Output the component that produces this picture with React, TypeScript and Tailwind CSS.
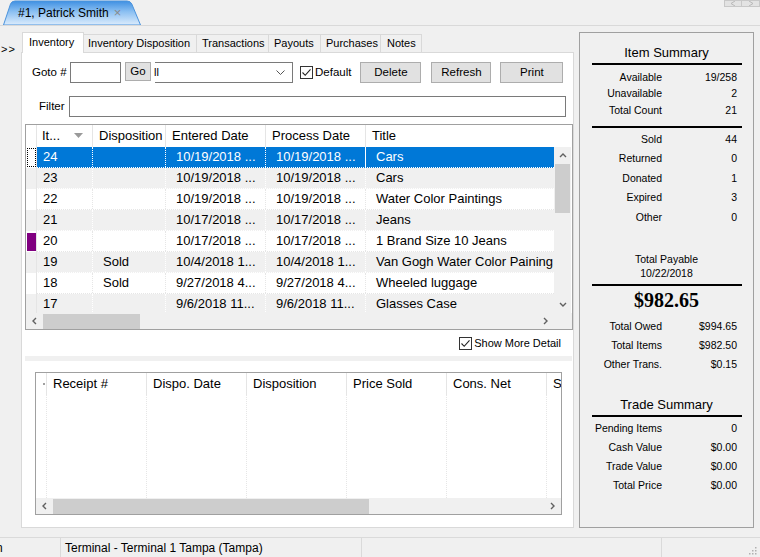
import React from 'react';

const FONT = "font-['Liberation_Sans',Arial,sans-serif]";

function Chev({ dir, className = '' }: { dir: 'up' | 'down' | 'left' | 'right'; className?: string }) {
  const paths: Record<string, string> = {
    up: 'M1,5 L4,2 L7,5',
    down: 'M1,2 L4,5 L7,2',
    left: 'M5,1 L2,4 L5,7',
    right: 'M2,1 L5,4 L2,7',
  };
  return (
    <svg width="8" height="8" viewBox="0 0 8 8" className={className}>
      <path d={paths[dir]} fill="none" stroke="#606060" strokeWidth="1.4" />
    </svg>
  );
}

function Check({ className = '' }: { className?: string }) {
  return (
    <div className={`w-[13px] h-[13px] border border-[#333] bg-white flex items-center justify-center ${className}`}>
      <svg width="11" height="11" viewBox="0 0 11 11">
        <path d="M1.5,5.5 L4.2,8.3 L9.5,2.3" fill="none" stroke="#222" strokeWidth="1.1" />
      </svg>
    </div>
  );
}

const rows = [
  { id: '24', disp: '', ent: '10/19/2018 ...', proc: '10/19/2018 ...', title: 'Cars', sel: true },
  { id: '23', disp: '', ent: '10/19/2018 ...', proc: '10/19/2018 ...', title: 'Cars' },
  { id: '22', disp: '', ent: '10/19/2018 ...', proc: '10/19/2018 ...', title: 'Water Color Paintings' },
  { id: '21', disp: '', ent: '10/17/2018 ...', proc: '10/17/2018 ...', title: 'Jeans' },
  { id: '20', disp: '', ent: '10/17/2018 ...', proc: '10/17/2018 ...', title: '1 Brand Size 10 Jeans', mark: true },
  { id: '19', disp: 'Sold', ent: '10/4/2018 1...', proc: '10/4/2018 1...', title: 'Van Gogh Water Color Paining' },
  { id: '18', disp: 'Sold', ent: '9/27/2018 4...', proc: '9/27/2018 4...', title: 'Wheeled luggage' },
  { id: '17', disp: '', ent: '9/6/2018 11...', proc: '9/6/2018 11...', title: 'Glasses Case' },
];

function SummaryRow({ label, value, h }: { label: string; value: string; h: string }) {
  return (
    <div className={`flex items-center ${h} text-[10.5px] text-black`}>
      <div className="w-[82px] text-right whitespace-nowrap">{label}</div>
      <div className="w-[75px] text-right">{value}</div>
    </div>
  );
}

export default function App() {
  return (
    <div className={`w-[760px] h-[557px] bg-[#f0f0f0] relative overflow-hidden flex flex-col ${FONT} text-black`}>
      {/* top doc tab bar */}
      <div className="h-[26px] border-b border-[#d9d9d9] flex items-end pl-[3px] relative">
        <div className="relative w-[138px] h-[25px] flex items-center pl-[15px]">
          <svg className="absolute left-0 top-0" width="138" height="25" viewBox="0 0 138 25">
            <defs>
              <linearGradient id="tabg" x1="0" y1="0" x2="0" y2="1">
                <stop offset="0" stopColor="#3f90e2" />
                <stop offset="0.45" stopColor="#8cc0f2" />
                <stop offset="1" stopColor="#dcecfc" />
              </linearGradient>
            </defs>
            <path d="M0.5,25 L7.5,4 Q8.7,1 12,1 L124,1 Q127.5,1 128.8,4 L137.5,25 Z" fill="url(#tabg)" stroke="#4b93dc" strokeWidth="1" />
          </svg>
          <span className="relative text-[12px] leading-none">#1, Patrick Smith</span>
          <span className="relative text-[13px] leading-none text-[#8a8a8a] ml-[5px]">×</span>
        </div>
        <div className="absolute right-0 top-0 flex">
          <div className="w-[18px] h-[7px] bg-[#e3e3e3] border border-[#c8c8c8] flex items-center justify-center">
            <svg width="6" height="5" viewBox="0 0 6 5"><path d="M5,0 L1,2.5 L5,5" fill="none" stroke="#b8b8b8" /></svg>
          </div>
          <div className="w-[18px] h-[7px] bg-[#e3e3e3] border border-[#c8c8c8] border-l-0 flex items-center justify-center">
            <svg width="6" height="5" viewBox="0 0 6 5"><path d="M1,0 L5,2.5 L1,5" fill="none" stroke="#b8b8b8" /></svg>
          </div>
        </div>
      </div>

      {/* main */}
      <div className="flex pt-[6px]">
        <div className="w-[21px] text-[11px] pt-[9px] pl-[1px] tracking-[1px]">&gt;&gt;</div>

        {/* tab control */}
        <div className="w-[553px] flex flex-col">
          <div className="flex items-end h-[20px] pl-[1px] text-[11px]">
            <div className="w-[62px] h-[21px] -mb-[1px] pl-[6px] bg-white border border-b-0 border-[#d9d9d9] flex items-center relative z-10 pb-[2px]">Inventory</div>
            <div className="w-[113px] h-[18px] pl-[4px] border border-b-0 border-l-0 border-[#d9d9d9] flex items-center">Inventory Disposition</div>
            <div className="w-[72px] h-[18px] pl-[5px] border border-b-0 border-l-0 border-[#d9d9d9] flex items-center">Transactions</div>
            <div className="w-[52px] h-[18px] pl-[5px] border border-b-0 border-l-0 border-[#d9d9d9] flex items-center">Payouts</div>
            <div className="w-[60px] h-[18px] pl-[5px] border border-b-0 border-l-0 border-[#d9d9d9] flex items-center">Purchases</div>
            <div className="w-[41px] h-[18px] pl-[6px] border border-b-0 border-l-0 border-[#d9d9d9] flex items-center">Notes</div>
          </div>
          <div className="h-[476px] bg-white border border-[#d9d9d9] flex flex-col pl-[3px]">
            {/* toolbar row */}
            <div className="flex items-center h-[21px] mt-[9px] text-[11.5px]">
              <span className="ml-[7px] w-[38px]">Goto #</span>
              <div className="w-[51px] h-[21px] border border-[#7a7a7a] bg-white" />
              <div className="ml-[4px] w-[26px] h-[19px] border border-[#adadad] bg-[#e1e1e1] flex items-center justify-center text-[11.5px] self-start">Go</div>
              <div className="ml-[4px] w-[138px] h-[21px] border border-l-0 border-[#7a7a7a] bg-white flex items-center justify-between pr-[7px]">
                <span className="text-[11px] -ml-[1px]">ll</span>
                <svg width="9" height="5" viewBox="0 0 9 5"><path d="M0.5,0.5 L4.5,4.5 L8.5,0.5" fill="none" stroke="#555" /></svg>
              </div>
              <Check className="ml-[7px]" />
              <span className="ml-[2px] text-[11.5px]">Default</span>
              <div className="ml-[9px] w-[61px] h-[21px] border border-[#adadad] bg-[#e1e1e1] flex items-center justify-center">Delete</div>
              <div className="ml-[10px] w-[60px] h-[21px] border border-[#adadad] bg-[#e1e1e1] flex items-center justify-center">Refresh</div>
              <div className="ml-[9px] w-[63px] h-[21px] border border-[#adadad] bg-[#e1e1e1] flex items-center justify-center">Print</div>
            </div>
            {/* filter row */}
            <div className="flex items-center h-[21px] mt-[13px] text-[11.5px]">
              <span className="ml-[14px] w-[30px]">Filter</span>
              <div className="w-[497px] h-[21px] border border-[#7a7a7a] bg-white" />
            </div>

            {/* main grid */}
            <div className="mt-[7px] w-[548px] h-[206px] border border-[#a0a0a0] flex flex-col text-[13px]">
              <div className="h-[22px] flex bg-white shrink-0">
                <div className="w-[11px] border-r border-[#e5e5e5]" />
                <div className="w-[56px] border-r border-[#e5e5e5] flex items-center pl-[5px] relative">
                  It...
                  <svg className="absolute left-[37px] top-[8px]" width="9" height="5" viewBox="0 0 9 5"><path d="M0,0 L9,0 L4.5,5 Z" fill="#9a9a9a" /></svg>
                </div>
                <div className="w-[73px] border-r border-[#e5e5e5] flex items-center pl-[6px]">Disposition</div>
                <div className="w-[100px] border-r border-[#e5e5e5] flex items-center pl-[6px]">Entered Date</div>
                <div className="w-[100px] border-r border-[#e5e5e5] flex items-center pl-[6px]">Process Date</div>
                <div className="flex-1 flex items-center pl-[6px]">Title</div>
              </div>
              <div className="h-[166px] flex shrink-0">
                <div className="w-[528px] overflow-hidden">
                  {rows.map((r, i) => {
                    const bg = r.sel ? 'bg-[#0078d7] text-white' : i % 2 === 1 ? 'bg-[#f0f0f0]' : 'bg-white';
                    const line = r.sel ? 'border-white' : i % 2 === 1 ? 'border-white' : 'border-[#e6e6e6]';
                    return (
                      <div key={r.id} className="h-[21px] flex shrink-0">
                        <div className={`w-[11px] h-[21px] border-r border-[#e5e5e5] ${i % 2 === 1 ? 'bg-[#f0f0f0]' : 'bg-white'} flex items-center justify-center`}>
                          {r.sel && <div className="w-[9px] h-[19px] border border-dotted border-black" />}
                          {r.mark && <div className="w-[9px] h-[18px] bg-[#800080]" />}
                        </div>
                        <div className={`flex flex-1 ${bg} border-b border-dotted ${line}`}>
                          <div className={`w-[56px] border-r border-dotted ${line} flex items-center pl-[6px]`}>{r.id}</div>
                          <div className={`w-[73px] border-r border-dotted ${line} flex items-center pl-[10px]`}>{r.disp}</div>
                          <div className={`w-[100px] border-r border-dotted ${line} flex items-center pl-[10px] whitespace-nowrap`}>{r.ent}</div>
                          <div className={`w-[100px] border-r ${r.sel ? 'border-solid' : 'border-dotted'} ${line} flex items-center pl-[10px] whitespace-nowrap`}>{r.proc}</div>
                          <div className="flex-1 flex items-center pl-[10px] whitespace-nowrap overflow-hidden">{r.title}</div>
                        </div>
                      </div>
                    );
                  })}
                </div>
                <div className="w-[17px] bg-[#f0f0f0] flex flex-col items-center">
                  <div className="h-[17px] flex items-center justify-center"><Chev dir="up" /></div>
                  <div className="w-[15px] h-[49px] bg-[#cdcdcd]" />
                  <div className="flex-1" />
                  <div className="h-[17px] flex items-center justify-center"><Chev dir="down" /></div>
                </div>
              </div>
              <div className="h-[16px] flex shrink-0 bg-[#f0f0f0]">
                <div className="w-[528px] flex items-center">
                  <div className="w-[17px] flex justify-center"><Chev dir="left" /></div>
                  <div className="w-[97px] h-[15px] bg-[#cdcdcd]" />
                  <div className="flex-1" />
                  <div className="w-[17px] flex justify-center"><Chev dir="right" /></div>
                </div>
                <div className="w-[17px]" />
              </div>
            </div>

            {/* show more detail */}
            <div className="mt-[6px] h-[15px] flex items-center justify-end pr-[12px]">
              <Check />
              <span className="ml-[2px] text-[11px]">Show More Detail</span>
            </div>

            {/* splitter band */}
            <div className="mt-[5px] w-[547px] h-[5px] bg-[#f0f0f0]" />

            {/* lower grid */}
            <div className="mt-[11px] ml-[10px] w-[527px] h-[143px] border border-[#a0a0a0] flex flex-col text-[13px]">
              <div className="h-[22px] flex bg-white shrink-0">
                <div className="w-[11px] border-r border-[#e5e5e5] relative">
                  <div className="absolute right-[1px] top-[10px] w-[2px] h-[2px] bg-[#a0a0a0]" />
                </div>
                {['Receipt #', 'Dispo. Date', 'Disposition', 'Price Sold', 'Cons. Net'].map((h) => (
                  <div key={h} className="w-[100px] border-r border-[#e5e5e5] flex items-center pl-[6px] whitespace-nowrap">{h}</div>
                ))}
                <div className="flex-1 flex items-center pl-[6px] overflow-hidden">S</div>
              </div>
              <div className="h-[103px] flex bg-white shrink-0">
                <div className="w-[11px] border-r border-dotted border-[#e6e6e6]" />
                {[0, 1, 2, 3, 4].map((k) => (
                  <div key={k} className="w-[100px] border-r border-dotted border-[#e6e6e6]" />
                ))}
                <div className="flex-1" />
              </div>
              <div className="h-[16px] flex items-center shrink-0 bg-[#f0f0f0]">
                <div className="w-[17px] flex justify-center"><Chev dir="left" /></div>
                <div className="w-[316px] h-[15px] bg-[#cdcdcd]" />
                <div className="flex-1" />
                <div className="w-[17px] flex justify-center"><Chev dir="right" /></div>
              </div>
            </div>
          </div>
        </div>

        {/* right summary panel */}
        <div className="ml-[5px] w-[175px] h-[496px] border border-[#a0a0a0] bg-[#f0f0f0] flex flex-col">
          <div className="mt-[12px] h-[16px] flex items-center justify-center text-[13px]">Item Summary</div>
          <div className="mt-[2px] ml-[12px] w-[150px] h-[2px] bg-black" />
          <div className="mt-[5px]">
            <SummaryRow label="Available" value="19/258" h="h-[16px]" />
            <SummaryRow label="Unavailable" value="2" h="h-[16px]" />
            <SummaryRow label="Total Count" value="21" h="h-[17px]" />
          </div>
          <div className="mt-[7px] ml-[12px] w-[150px] h-[2px] bg-black" />
          <div className="mt-[2px]">
            <SummaryRow label="Sold" value="44" h="h-[19.5px]" />
            <SummaryRow label="Returned" value="0" h="h-[19.5px]" />
            <SummaryRow label="Donated" value="1" h="h-[19.5px]" />
            <SummaryRow label="Expired" value="3" h="h-[19.5px]" />
            <SummaryRow label="Other" value="0" h="h-[19.5px]" />
          </div>
          <div className="mt-[25.5px] text-[10.5px] text-center">
            <div className="h-[14px] flex items-center justify-center">Total Payable</div>
            <div className="h-[14px] flex items-center justify-center">10/22/2018</div>
          </div>
          <div className="mt-[3px] ml-[12px] w-[150px] h-[2px] bg-black" />
          <div className="mt-[2px] h-[24px] flex items-center justify-center font-['Liberation_Serif','Times_New_Roman',serif] font-bold text-[20px]">$982.65</div>
          <div className="mt-[5.5px]">
            <SummaryRow label="Total Owed" value="$994.65" h="h-[19px]" />
            <SummaryRow label="Total Items" value="$982.50" h="h-[19px]" />
            <SummaryRow label="Other Trans." value="$0.15" h="h-[19px]" />
          </div>
          <div className="mt-[22.5px] h-[16px] flex items-center justify-center text-[13px]">Trade Summary</div>
          <div className="mt-[2px] ml-[12px] w-[150px] h-[2px] bg-black" />
          <div className="mt-[2.5px]">
            <SummaryRow label="Pending Items" value="0" h="h-[19px]" />
            <SummaryRow label="Cash Value" value="$0.00" h="h-[19px]" />
            <SummaryRow label="Trade Value" value="$0.00" h="h-[19px]" />
            <SummaryRow label="Total Price" value="$0.00" h="h-[19px]" />
          </div>
        </div>
      </div>

      {/* status bar */}
      <div className="mt-auto h-[20px] border-t border-[#dadada] flex text-[12px] relative">
        <div className="w-[61px] border-r border-[#dadada] overflow-hidden flex items-center"><span className="-ml-[4px]">n</span></div>
        <div className="w-[301px] border-r border-[#dadada] flex items-center pl-[4px] whitespace-nowrap">Terminal - Terminal 1 Tampa (Tampa)</div>
        <div className="w-[300px] border-r border-[#dadada]" />
        <div className="flex-1 relative">
          <svg className="absolute right-[3px] bottom-[2px]" width="8" height="8" viewBox="0 0 8 8">
            <rect x="6" y="0" width="1.5" height="1.5" fill="#b0b0b0" />
            <rect x="3" y="3" width="1.5" height="1.5" fill="#b0b0b0" />
            <rect x="6" y="3" width="1.5" height="1.5" fill="#b0b0b0" />
            <rect x="0" y="6" width="1.5" height="1.5" fill="#b0b0b0" />
            <rect x="3" y="6" width="1.5" height="1.5" fill="#b0b0b0" />
            <rect x="6" y="6" width="1.5" height="1.5" fill="#b0b0b0" />
          </svg>
        </div>
      </div>
    </div>
  );
}
